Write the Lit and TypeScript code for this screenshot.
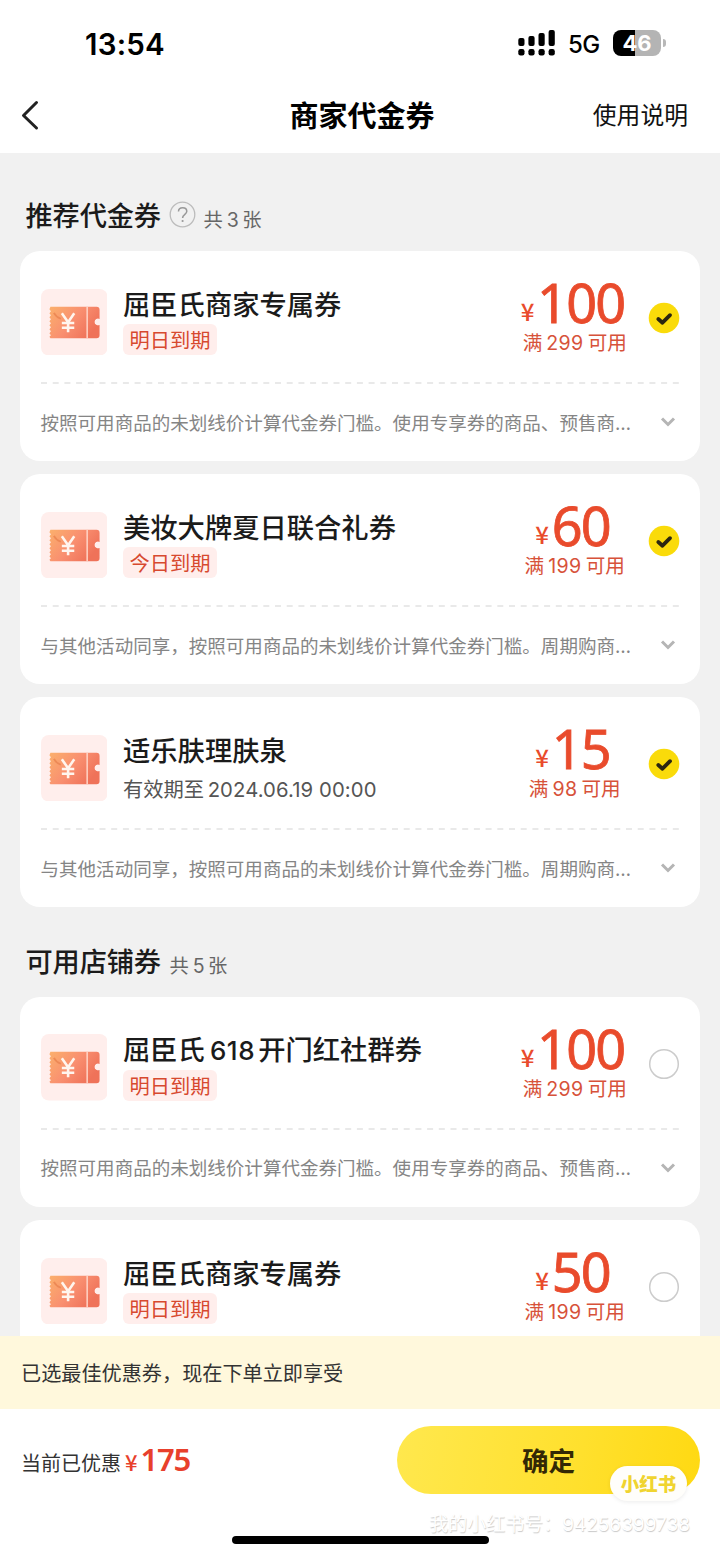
import { LitElement, html, css, svg, nothing } from "lit";
import { customElement, property } from "lit/decorators.js";

interface Coupon {
  title: unknown;
  tag?: string;
  validity?: string;
  amount: string;
  threshold: string;
  desc: string;
  selected: boolean;
}

const DESC_A = "按照可用商品的未划线价计算代金券门槛。使用专享券的商品、预售商";
const DESC_B = "与其他活动同享，按照可用商品的未划线价计算代金券门槛。周期购商";

const recommended: Coupon[] = [
  { title: "屈臣氏商家专属券", tag: "明日到期", amount: "100", threshold: "299", desc: DESC_A, selected: true },
  { title: "美妆大牌夏日联合礼券", tag: "今日到期", amount: "60", threshold: "199", desc: DESC_B, selected: true },
  { title: "适乐肤理肤泉", validity: "2024.06.19 00:00", amount: "15", threshold: "98", desc: DESC_B, selected: true },
];

const available: Coupon[] = [
  { title: html`屈臣氏<span class="num">618</span>开门红社群券`, tag: "明日到期", amount: "100", threshold: "299", desc: DESC_A, selected: false },
  { title: "屈臣氏商家专属券", tag: "明日到期", amount: "50", threshold: "199", desc: DESC_A, selected: false },
];

@customElement("coupon-card")
export class CouponCard extends LitElement {
  @property({ attribute: false }) coupon!: Coupon;

  static styles = css`
    :host {
      display: block;
      height: 210px;
      flex: none;
      box-sizing: border-box;
      padding: 0 20px 0 20.5px;
      border-radius: 20px;
      background: #fff;
    }
    .main {
      display: flex;
      height: 131px;
      align-items: flex-start;
    }
    .thumb {
      flex: none;
      width: 66.5px;
      height: 66.5px;
      margin-top: 37.5px;
    }
    .info {
      flex: 1;
      margin: 31.5px 0 0 16px;
      display: flex;
      flex-direction: column;
      align-items: flex-start;
      white-space: nowrap;
    }
    .title {
      height: 41.5px;
      font-size: 27.3px;
      line-height: 40px;
      font-weight: 500;
      color: #1b1b1b;
    }
    .title .num {
      font-size: 26px;
      line-height: 1;
      margin: 0 3px 0 5px;
      letter-spacing: 0.6px;
    }
    .tag {
      height: 31px;
      line-height: 30px;
      padding: 0 6.5px;
      border-radius: 6px;
      background: #ffeeec;
      color: #d7492f;
      font-size: 20.3px;
    }
    .validity {
      height: 34px;
      padding-top: 1px;
      font-size: 20.3px;
      line-height: 34px;
      color: #555;
    }
    .validity .num {
      margin-left: 3.5px;
      line-height: 1;
      letter-spacing: 0.1px;
    }
    .offer {
      flex: none;
      width: 130px;
      margin-top: 24px;
      display: flex;
      flex-direction: column;
      align-items: center;
      color: #e94b2c;
      white-space: nowrap;
    }
    .price {
      display: flex;
      align-items: baseline;
      height: 53px;
      margin-left: -8px;
    }
    .yen {
      font: 500 24px/54px "Noto Sans CJK SC", sans-serif;
      width: 17px;
      display: flex;
      justify-content: center;
      transform: translate(-0.5px, -2px);
      margin-right: 0.5px;
    }
    .amount {
      font: 400 54px/54px "Noto Sans", sans-serif;
      letter-spacing: -1.8px;
      -webkit-text-stroke: 0.8px #e94b2c;
    }
    .threshold {
      height: 28px;
      margin-left: -2.5px;
      font-size: 19.6px;
      line-height: 27px;
      color: #d7523a;
    }
    .threshold .num {
      margin: 0 4px 0 4px;
      line-height: 1;
      letter-spacing: 0.4px;
    }
    .select {
      flex: none;
      width: 32px;
      height: 32px;
      margin: 51px 0 0 7px;
    }
    .divider {
      display: block;
      width: 640px;
      height: 2px;
    }
    .rules {
      display: flex;
      align-items: center;
      height: 75px;
    }
    .desc {
      width: 594px;
      font-size: 18.55px;
      line-height: 28px;
      color: #858585;
      white-space: nowrap;
    }
    .dots {
      font-family: Inter, sans-serif;
      line-height: 1;
      letter-spacing: 1px;
    }
    .chev {
      margin: 1px 0 0 25px;
    }
    .num {
      font-family: Inter, sans-serif;
    }
  `;

  private thumb() {
    return svg`<svg class="thumb" viewBox="0 0 67 67">
      <defs>
        <linearGradient id="g" x1="0" y1="0" x2="1" y2="0.5">
          <stop offset="0" stop-color="#fbb06c"/>
          <stop offset="0.55" stop-color="#f98f70"/>
          <stop offset="1" stop-color="#ef7259"/>
        </linearGradient>
      </defs>
      <rect width="67" height="67" rx="8" fill="#ffeeec"/>
      <path fill="url(#g)" d="M9.5 18H56Q59 18 59 21V30.200A3.400 3.400 0 1 0 59 36.200V46.500Q59 49.500 56 49.500H9.500L8.500 48 10 46.500 8.500 44.500 10 42.500 8.500 40.500 10 38.500 8.500 36.500 10 34.500 8.500 32.500 10 30.500 8.500 28.500 10 26.500 8.500 24.500 10 22.500 8.500 20.500Z"/>
      <path d="M46.500 18V49.500" stroke="#ffd5c7" stroke-width="1.500"/>
      <path d="M13 24Q15 28 20 30" stroke="#e77f4c" stroke-width="1.800" fill="none" opacity=".7"/>
      <path d="M21 24.500L27.300 33.500 33.500 24.500M27.300 33.500V43.500M21 34.300H33.500M21 39H33.500" stroke="#fff5ee" stroke-width="2.600" fill="none"/>
    </svg>`;
  }

  render() {
    const c = this.coupon;
    return html`
      <div class="main">
        ${this.thumb()}
        <div class="info">
          <div class="title">${c.title}</div>
          ${c.tag ? html`<div class="tag">${c.tag}</div>` : nothing}
          ${c.validity ? html`<div class="validity">有效期至<span class="num">${c.validity}</span></div>` : nothing}
        </div>
        <div class="offer">
          <div class="price"><span class="yen">¥</span><span class="amount">${c.amount}</span></div>
          <div class="threshold">满<span class="num">${c.threshold}</span>可用</div>
        </div>
        <svg class="select" viewBox="0 0 32 32">
          ${c.selected
            ? svg`<circle cx="16" cy="16" r="15.300" fill="#fadb0a"/>
                <path d="M10.300 17L14.500 20.700 22 13.200" fill="none" stroke="#2b2610" stroke-width="3.800" stroke-linecap="round" stroke-linejoin="round"/>`
            : svg`<circle cx="16" cy="16" r="14.300" fill="#fff" stroke="#ccc" stroke-width="1.500"/>`}
        </svg>
      </div>
      <svg class="divider" viewBox="0 0 640 2">
        <path d="M0 1H640" stroke="#e2e2e2" stroke-width="1.500" stroke-dasharray="6 5.700"/>
      </svg>
      <div class="rules">
        <div class="desc">${c.desc}<span class="dots">…</span></div>
        <svg class="chev" width="16" height="12" viewBox="0 0 16 12">
          <path d="M2 2.500L8 8.500 14 2.500" fill="none" stroke="#b5b5b5" stroke-width="3"/>
        </svg>
      </div>
    `;
  }
}

@customElement("app-root")
export class AppRoot extends LitElement {
  static styles = css`
    :host {
      display: flex;
      flex-direction: column;
      width: 720px;
      height: 1558px;
      overflow: hidden;
      background: #fff;
      color: #1b1b1b;
      font-family: "Noto Sans CJK SC", sans-serif;
    }
    .num {
      font-family: Inter, sans-serif;
    }
    .status {
      flex: none;
      display: flex;
      align-items: center;
      height: 86px;
      padding: 0 54px 0 85px;
      color: #000;
    }
    .time {
      flex: 1;
      padding-top: 1px;
      font: 600 29.500px/34px Inter, sans-serif;
      letter-spacing: 0.2px;
    }
    .net {
      font: 500 24px/30px Inter, sans-serif;
      width: 45px;
      margin: 3px 0 0 12px;
      letter-spacing: -0.5px;
    }
    .battery {
      display: flex;
      align-items: center;
      justify-content: center;
      width: 48px;
      height: 26px;
      border-radius: 8px;
      background: linear-gradient(90deg, #000 46%, #b4b4b4 46%);
      color: #fff;
      font: 700 22px/26px Inter, sans-serif;
    }
    .nub {
      width: 3px;
      height: 8px;
      margin-left: 2px;
      border-radius: 0 3px 3px 0;
      background: #b8b8b8;
    }
    .nav {
      flex: none;
      display: grid;
      grid-template-columns: 200px 1fr 200px;
      align-items: center;
      height: 67px;
      box-sizing: border-box;
    }
    .back {
      margin: -9px 0 0 19px;
    }
    .heading {
      margin-top: -11px;
      padding-left: 4px;
      text-align: center;
      font-size: 29px;
      line-height: 44px;
      font-weight: 700;
      color: #000;
    }
    .help {
      margin-top: -12px;
      padding-right: 32px;
      text-align: right;
      font-size: 23.800px;
      line-height: 36px;
      color: #111;
    }
    .list {
      flex: none;
      height: 1183px;
      overflow: hidden;
      box-sizing: border-box;
      padding: 0 20px;
      background: #f1f1f1;
      display: flex;
      flex-direction: column;
    }
    .section {
      flex: none;
      display: flex;
      align-items: center;
      height: 98px;
      padding: 24px 0 0 5.500px;
      box-sizing: border-box;
      white-space: nowrap;
    }
    .section.second {
      height: 89.600px;
      padding-top: 15px;
    }
    .name {
      font-size: 27.200px;
      line-height: 40px;
      font-weight: 500;
      letter-spacing: -0.1px;
    }
    .ask {
      margin: 1px 0 0 8px;
    }
    .count {
      margin: 10px 0 0 7.500px;
      font-size: 19.300px;
      line-height: 30px;
      color: #666;
    }
    .second .count {
      margin-left: 8.500px;
    }
    .count .num {
      margin: 0 3.500px 0 4px;
      line-height: 1;
      font-size: 19.500px;
    }
    .cards {
      flex: none;
      display: flex;
      flex-direction: column;
      gap: 13.200px;
    }
    .notice {
      flex: none;
      height: 73px;
      line-height: 73px;
      padding-left: 21px;
      background: #fff8dc;
      font-size: 20.150px;
      color: #333;
    }
    .footer {
      flex: none;
      position: relative;
      display: flex;
      justify-content: space-between;
      align-items: flex-start;
      height: 149px;
      padding: 0 20px 0 21px;
    }
    .saved {
      display: flex;
      align-items: baseline;
      margin-top: 30px;
      line-height: 40px;
      font-size: 20px;
      color: #333;
    }
    .saved-yen {
      margin-left: 4px;
      font-size: 22px;
      font-weight: 500;
      color: #e8402c;
    }
    .saved-sum {
      margin-left: 3px;
      font: 600 31px/40px "Noto Sans", sans-serif;
      letter-spacing: -1.200px;
      color: #e8402c;
    }
    .confirm {
      width: 303px;
      height: 68px;
      margin-top: 17px;
      border: 0;
      padding: 0;
      border-radius: 34px;
      background: linear-gradient(100deg, #ffe84e, #ffe02d 60%, #ffd912);
      font: 700 26.500px/66px "Noto Sans CJK SC", sans-serif;
      color: #332805;
    }
    .badge {
      position: absolute;
      left: 610px;
      top: 57px;
      width: 77px;
      height: 35px;
      border-radius: 18px;
      background: #fffefb;
      box-shadow: 0 1px 4px rgba(0, 0, 0, 0.08);
      text-align: center;
      font-size: 18.500px;
      line-height: 35px;
      font-weight: 900;
      color: #f0d430;
    }
    .mark {
      position: absolute;
      right: 30px;
      top: 101px;
      white-space: nowrap;
      font: 400 19px/30px Inter, "Noto Sans CJK SC", sans-serif;
      color: #fff;
      text-shadow: 0.500px 1px 1px rgba(0, 0, 0, 0.22);
    }
    .home {
      position: absolute;
      left: 232px;
      top: 127px;
      width: 257px;
      height: 8px;
      border-radius: 4px;
      background: #000;
    }
  `;

  render() {
    const bars = [8, 10, 13, 16];
    return html`
      <div class="status">
        <span class="time">13:54</span>
        <svg width="38" height="27" viewBox="0 0 38 27">
          ${bars.map(
            (h, i) => svg`<rect x=${0.3 + i * 10.1} y=${16 - h} width="6.200" height=${h} rx="2"/>
              <rect x=${0.3 + i * 10.1} y="19" width="6.200" height="6.500" rx="2.200"/>`
          )}
        </svg>
        <span class="net">5G</span>
        <span class="battery">46</span><span class="nub"></span>
      </div>
      <div class="nav">
        <svg class="back" width="22" height="32" viewBox="0 0 22 32">
          <path d="M17.500 3.500L4.500 16.500 17.500 29" fill="none" stroke="#222" stroke-width="3" stroke-linecap="round" stroke-linejoin="round"/>
        </svg>
        <div class="heading">商家代金券</div>
        <div class="help">使用说明</div>
      </div>
      <div class="list">
        <div class="section">
          <span class="name">推荐代金券</span>
          <svg class="ask" width="27" height="27" viewBox="0 0 27 27">
            <circle cx="13.500" cy="13.500" r="12.300" fill="none" stroke="#bcbcbc" stroke-width="1.300"/>
            <path d="M9.500 10.500C9.500 5.300 17.800 5.500 17.800 10.300 17.800 13.300 13.600 13.400 13.600 17" fill="none" stroke="#999" stroke-width="1.500"/>
            <circle cx="13.600" cy="20" r="1.100" fill="#999"/>
          </svg>
          <span class="count">共<span class="num">3</span>张</span>
        </div>
        <div class="cards">${recommended.map((c) => html`<coupon-card .coupon=${c}></coupon-card>`)}</div>
        <div class="section second">
          <span class="name">可用店铺券</span>
          <span class="count">共<span class="num">5</span>张</span>
        </div>
        <div class="cards">${available.map((c) => html`<coupon-card .coupon=${c}></coupon-card>`)}</div>
      </div>
      <div class="notice">已选最佳优惠券，现在下单立即享受</div>
      <div class="footer">
        <div class="saved">当前已优惠<span class="saved-yen">¥</span><span class="saved-sum">175</span></div>
        <button class="confirm">确定</button>
        <div class="badge">小红书</div>
        <div class="mark">我的小红书号：94256399738</div>
        <div class="home"></div>
      </div>
    `;
  }
}
